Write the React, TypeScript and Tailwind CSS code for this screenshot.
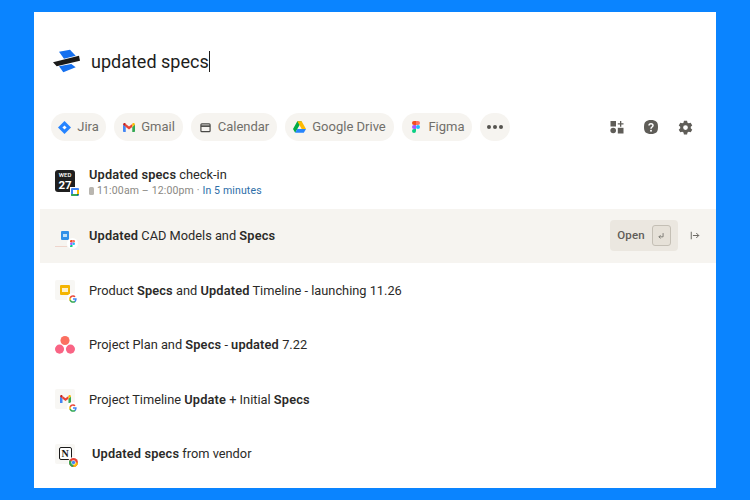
import React from "react";

function GBadge() {
  return (
    <svg viewBox="0 0 24 24" className="h-[8px] w-[8px]">
      <path fill="#4285F4" d="M23 12.300c0-.8-.1-1.600-.2-2.300H12v4.400h6.200a5.300 5.300 0 0 1-2.300 3.500v2.900h3.700c2.100-2 3.400-4.900 3.400-8.500z" />
      <path fill="#34A853" d="M12 23.500c3.100 0 5.700-1 7.600-2.800l-3.700-2.900c-1 .7-2.300 1.100-3.900 1.100-3 0-5.500-2-6.400-4.700H1.800v3c1.900 3.800 5.800 6.300 10.200 6.300z" />
      <path fill="#FBBC05" d="M5.600 14.200a6.900 6.900 0 0 1 0-4.400v-3H1.800a11.500 11.500 0 0 0 0 10.400z" />
      <path fill="#EA4335" d="M12 5.100c1.700 0 3.200.6 4.400 1.700l3.300-3.300C17.700 1.600 15.100.5 12 .5 7.600.5 3.700 3 1.800 6.800l3.800 3C6.500 7.100 9 5.100 12 5.100z" />
    </svg>
  );
}

function Badge({ children, cls }: { children: React.ReactNode; cls: string }) {
  return (
    <span className={"absolute flex h-[11px] w-[11px] items-center justify-center rounded-full bg-white " + cls}>
      {children}
    </span>
  );
}

function GmailIcon({ size = 12 }: { size?: number }) {
  return (
    <svg viewBox="0 0 24 18" width={size} height={(size * 18) / 24}>
      <path fill="#4285F4" d="M0 3v13.500A1.500 1.500 0 0 0 1.500 18H5.500V8z" />
      <path fill="#34A853" d="M18.500 8v10h4a1.500 1.500 0 0 0 1.500-1.500V3z" />
      <path fill="#EA4335" d="M5.500 8V2l6.500 5 6.500-5v6L12 13z" />
      <path fill="#C5221F" d="M0 3c0-2.500 2.800-3.900 4.800-2.400L5.500 2v6z" />
      <path fill="#FBBC04" d="M18.500 2l.7-1.400C21.200-.9 24 .5 24 3l-5.500 5z" />
    </svg>
  );
}

function DriveIcon() {
  return (
    <svg viewBox="0 0 24 21" width="13" height="12">
      <path fill="#00AC47" d="M8 0h0L16 0 8 14 4 21 0 14z" />
      <path fill="#FFBA00" d="M8 0h8l8 14h-8z" />
      <path fill="#2684FC" d="M8 14h16l-4 7H4z" />
    </svg>
  );
}

function FigmaIcon({ w = 8 }: { w?: number }) {
  return (
    <svg viewBox="0 0 12 18" width={w} height={(w * 18) / 12}>
      <path fill="#F24E1E" d="M0 3a3 3 0 0 1 3-3h3v6H3a3 3 0 0 1-3-3z" />
      <path fill="#FF7262" d="M6 0h3a3 3 0 0 1 0 6H6z" />
      <path fill="#A259FF" d="M0 9a3 3 0 0 1 3-3h3v6H3a3 3 0 0 1-3-3z" />
      <circle fill="#1ABCFE" cx="9" cy="9" r="3" />
      <path fill="#0ACF83" d="M0 15a3 3 0 0 1 3-3h3v3a3 3 0 0 1-6 0z" />
    </svg>
  );
}

function Chip({ icon, label, w }: { icon: React.ReactNode; label: string; w: string }) {
  return (
    <div className={"flex h-[28px] items-center justify-center gap-[6px] rounded-full bg-[#f6f4f0] text-[13px] text-[#716f6a] " + w}>
      <span className="flex w-[13px] items-center justify-center">{icon}</span>
      <span>{label}</span>
    </div>
  );
}

function Tile({ children, badge }: { children: React.ReactNode; badge?: React.ReactNode }) {
  return (
    <div className="relative flex h-[20px] w-[20px] items-center justify-center rounded-[2px] bg-[#f8f7f4]">
      {children}
      {badge}
    </div>
  );
}

function B({ children }: { children: React.ReactNode }) {
  return <b className="font-semibold tracking-[0.15px]">{children}</b>;
}

function Row({ icon, children, sub, active, indent }: { icon: React.ReactNode; children: React.ReactNode; sub?: React.ReactNode; active?: boolean; indent?: boolean }) {
  return (
    <div className={"flex h-[54.500px] items-center pl-[15px] pr-[16px] " + (active ? "bg-[#f6f4f0]" : "")}>
      <div className={"flex w-[20px] shrink-0 items-center justify-center " + (indent ? "mr-[17px]" : "mr-[14px]")}>{icon}</div>
      <div className={"min-w-0 flex-1 " + (sub ? "pt-[2px]" : "")}>
        <div className="text-[12.800px] leading-[17px] text-[#2b2a28]">{children}</div>
        {sub}
      </div>
      {active && (
        <>
          <div className="flex h-[31px] w-[68px] items-center justify-center gap-[7px] rounded-[4px] bg-[#ebe7e0] text-[11.500px] font-medium tracking-[0.2px] text-[#5f5d58]">
            <span>Open</span>
            <span className="flex h-[21px] w-[19px] items-center justify-center rounded-[3px] border border-[#c4bfb5] bg-[#e6e1d8]">
              <svg viewBox="0 0 12 12" className="h-[10px] w-[10px]" fill="none" stroke="#6f6d68" strokeWidth="1">
                <path d="M8.500 2.500v4.500H3.500M5.500 5L3.500 7l2 2" />
              </svg>
            </span>
          </div>
          <svg viewBox="0 0 12 12" className="ml-[12px] h-[11px] w-[10px]" fill="none" stroke="#5f5d58" strokeWidth="1.100">
            <path d="M1.500 1.500v9M3.500 6h7M7.500 3L10.500 6 7.500 9" />
          </svg>
        </>
      )}
    </div>
  );
}

export default function App() {
  return (
    <div className="flex h-[500px] w-[750px] justify-center bg-[#0a84ff] pt-[12px] font-['Roboto','Liberation_Sans',sans-serif]">
      <div className="h-[476px] w-[682px] overflow-hidden bg-white">
        {/* Search */}
        <div className="flex h-[88px] items-center pl-[19px] pt-[10px]">
          <svg viewBox="0 0 27 25" className="h-[25px] w-[27px]">
            <path fill="#1570ef" d="M6 2.700L17 .7l5.700 6L11 9.800z" />
            <path fill="#1a1a1a" d="M0 13.300L26 6.700l1 5L3.700 17.300z" />
            <path fill="#1570ef" d="M6 17.300L18.300 15l4.400 3.300-12.400 5z" />
          </svg>
          <span className="ml-[11px] text-[18px] text-[#1e1d1b]">updated specs</span>
          <span className="h-[21px] w-[1px] bg-[#1e1d1b]" />
        </div>

        {/* Apps */}
        <div className="mt-[13px] flex items-center pl-[17px]">
          <div className="flex gap-[8px]">
            <Chip
              w="w-[55px]"
              label="Jira"
              icon={
                <svg viewBox="0 0 14 14" className="h-[13px] w-[13px]">
                  <path fill="#2684ff" d="M7 0l7 7-7 7-7-7z" />
                  <rect x="5.400" y="5.400" width="3.200" height="3.200" fill="#fff" transform="rotate(45 7 7)" />
                </svg>
              }
            />
            <Chip w="w-[69px]" label="Gmail" icon={<GmailIcon />} />
            <Chip
              w="w-[86px]"
              label="Calendar"
              icon={
                <svg viewBox="0 0 12 12" className="h-[11px] w-[11px]" fill="none" stroke="#4a4946" strokeWidth="1.300">
                  <rect x="1" y="2" width="10" height="8.500" rx="1" />
                  <path d="M1 4.500h10" strokeWidth="1.800" />
                </svg>
              }
            />
            <Chip w="w-[109px]" label="Google Drive" icon={<DriveIcon />} />
            <Chip w="w-[70px]" label="Figma" icon={<FigmaIcon />} />
            <div className="flex h-[28px] w-[30px] items-center justify-center gap-[2px] rounded-full bg-[#f6f4f0]">
              <span className="h-[4px] w-[4px] rounded-full bg-[#55534f]" />
              <span className="h-[4px] w-[4px] rounded-full bg-[#55534f]" />
              <span className="h-[4px] w-[4px] rounded-full bg-[#55534f]" />
            </div>
          </div>
          <div className="ml-auto flex items-center gap-[20px] pr-[23px]">
            <svg viewBox="0 0 14 14" className="h-[14px] w-[14px]" fill="#5f5d58">
              <rect x="0.500" y="1" width="5.500" height="5.500" />
              <path d="M10 1h1.300v2.200h2.200v1.300h-2.200v2.200H10V4.500H7.800V3.200H10z" />
              <circle cx="3.200" cy="10.500" r="2.800" />
              <rect x="7.800" y="7.800" width="5.700" height="5.700" />
            </svg>
            <svg viewBox="0 0 14 14" className="h-[14px] w-[14px]">
              <path fill="#5f5d58" d="M7 0c5 0 7 2 7 7s-2 7-7 7-7-2-7-7 2-7 7-7z" />
              <path fill="none" stroke="#fff" strokeWidth="1.500" d="M5 5.500C5 3 9 3 9 5.500 9 7 7 7 7 8.700" />
              <circle cx="7" cy="10.700" r="1" fill="#fff" />
            </svg>
            <svg viewBox="0 0 24 24" className="h-[15px] w-[15px]" fill="#5f5d58">
              <path
                fillRule="evenodd"
                d="M9.500 1h5l.7 3.200 2 1.100 3.100-1 2.500 4.300-2.400 2.200v2.400l2.400 2.200-2.500 4.300-3.100-1-2 1.100-.7 3.200h-5l-.7-3.200-2-1.100-3.100 1L1.200 15.400l2.400-2.200v-2.400L1.200 8.600l2.500-4.300 3.100 1 2-1.100zM12 8.200a3.800 3.800 0 1 0 0 7.600 3.800 3.800 0 0 0 0-7.600z"
              />
            </svg>
          </div>
        </div>

        {/* Results */}
        <div className="mt-[13px] pl-[6px]">
          <Row
            icon={
              <div className="relative flex h-[22px] w-[21px] flex-col items-center justify-start rounded-[3px] bg-[#1f1f1f] pt-[0.500px] text-white">
                <span className="text-[6px] leading-[7px] font-medium">WED</span>
                <span className="text-[11.500px] leading-[14px] font-bold">27</span>
                <span className="absolute -right-[4px] -bottom-[4px] flex h-[9px] w-[9px] items-center justify-center bg-white">
                  <svg viewBox="0 0 8 8" className="h-[8px] w-[8px]">
                    <rect width="8" height="8" rx="1" fill="#4285F4" />
                    <path fill="#34A853" d="M0 6h6v2H1a1 1 0 0 1-1-1z" />
                    <path fill="#FBBC04" d="M6 2h2v4H6z" />
                    <path fill="#188038" d="M6 6h2L6 8z" />
                    <rect x="2" y="2" width="4" height="4" fill="#fff" />
                  </svg>
                </span>
              </div>
            }
            sub={
              <div className="mt-[1px] flex items-center text-[10.500px] leading-[14px] tracking-[0.15px] text-[#8a8883]">
                <span className="mr-[3px] h-[8px] w-[5px] rounded-[1.500px] bg-[#b9b6b0]" />
                <span>11:00am – 12:00pm ·&nbsp;</span>
                <span className="text-[#2d6ea8]">In 5 minutes</span>
              </div>
            }
          >
            <B>Updated specs</B> check-in
          </Row>
          <Row
            active
            icon={
              <div className="relative flex h-[20px] w-[20px] items-center justify-center">
                <span className="flex h-[9px] w-[8px] items-center justify-center rounded-[1px] bg-[#2f8fe8]">
                  <span className="h-[3px] w-[4px] bg-[#bfe0f8]" />
                </span>
                <span className="absolute -bottom-[1px] left-0 h-px w-[12px] bg-[#efd5cc]" />
                <Badge cls="-right-[3px] -bottom-[3px]">
                  <FigmaIcon w={5} />
                </Badge>
              </div>
            }
          >
            <B>Updated</B> CAD Models and <B>Specs</B>
          </Row>
          <Row
            icon={
              <Tile badge={<Badge cls="-right-[3px] -bottom-[4px]"><GBadge /></Badge>}>
                <span className="flex h-[10px] w-[10px] items-center justify-center rounded-[1px] bg-[#f4b400]">
                  <span className="h-[4px] w-[6px] bg-[#fdf0c8]" />
                </span>
              </Tile>
            }
          >
            Product <B>Specs</B> and <B>Updated</B> Timeline - launching 11.26
          </Row>
          <Row
            icon={
              <svg viewBox="0 0 22 20" className="h-[20px] w-[22px]">
                <circle cx="11" cy="5" r="5" fill="#fb6f60" />
                <circle cx="5" cy="14.500" r="5" fill="#f96484" />
                <circle cx="17" cy="14.500" r="5" fill="#f96484" />
              </svg>
            }
          >
            Project Plan and <B>Specs</B> - <B>updated</B> 7.22
          </Row>
          <Row
            icon={
              <Tile badge={<Badge cls="-right-[3px] -bottom-[4px]"><GBadge /></Badge>}>
                <GmailIcon size={11} />
              </Tile>
            }
          >
            Project Timeline <B>Update</B> + Initial <B>Specs</B>
          </Row>
          <Row
            indent
            icon={
              <Tile
                badge={
                  <Badge cls="-right-[4px] -bottom-[4px]">
                    <svg viewBox="0 0 24 24" className="h-[9px] w-[9px]">
                      <circle cx="12" cy="12" r="12" fill="#EA4335" />
                      <path fill="#34A853" d="M12 24A12 12 0 0 1 1.600 6L12 12z" />
                      <path fill="#FBBC05" d="M12 12h12a12 12 0 0 1-12 12z" />
                      <circle cx="12" cy="12" r="6" fill="#fff" />
                      <circle cx="12" cy="12" r="4.500" fill="#4285F4" />
                    </svg>
                  </Badge>
                }
              >
                <span className="flex h-[13px] w-[13px] items-center justify-center rounded-[2px] border-[1.500px] border-[#1a1a1a] bg-white font-['Liberation_Serif',serif] text-[10px] leading-none font-bold text-[#1a1a1a]">
                  N
                </span>
              </Tile>
            }
          >
            <B>Updated specs</B> from vendor
          </Row>
        </div>
      </div>
    </div>
  );
}
